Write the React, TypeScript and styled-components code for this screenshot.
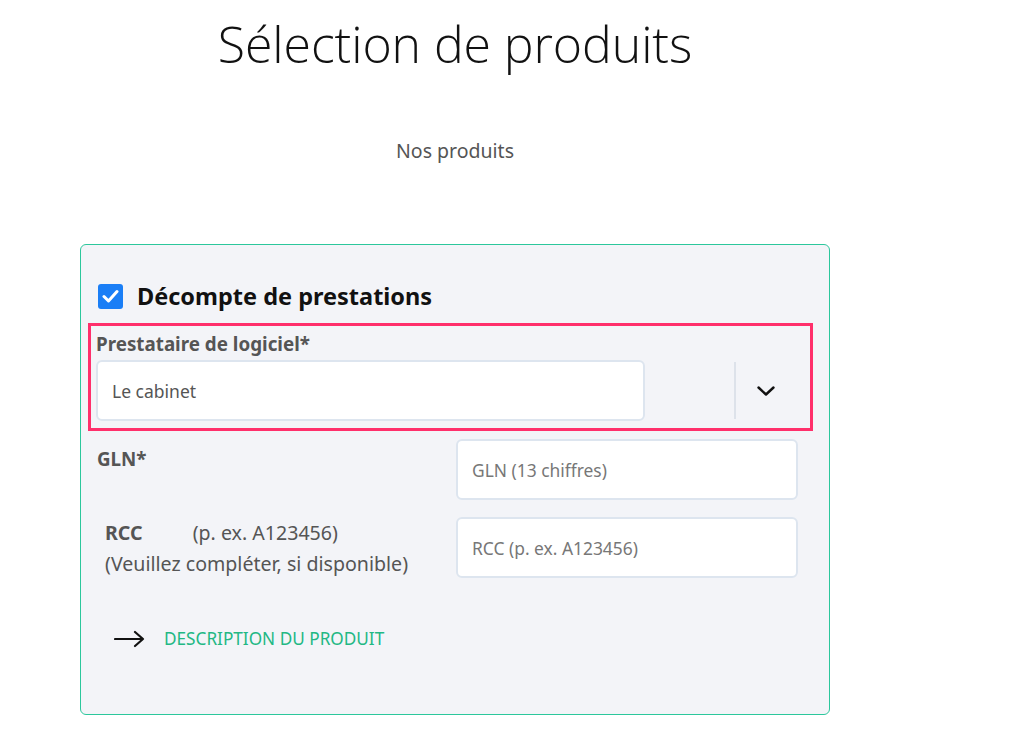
import React from "react";
import styled, { createGlobalStyle } from "styled-components";

const Global = createGlobalStyle`
  html, body { margin: 0; padding: 0; background: #ffffff; }
  body { font-family: "Noto Sans", "Open Sans", sans-serif; color: #222; }
`;

const Page = styled.div`
  width: 750px;
  margin-left: 80px;
  display: flex;
  flex-direction: column;
  align-items: center;
`;

const Title = styled.h1`
  margin: 10px 0 0 0;
  font-family: "Open Sans", "Noto Sans", sans-serif;
  font-weight: 300;
  font-size: 50px;
  line-height: 68px;
  color: #111;
  letter-spacing: -0.1px;
`;

const Subtitle = styled.p`
  margin: 61px 0 0 0;
  font-size: 19.5px;
  line-height: 24px;
  color: #555;
`;

const Card = styled.section`
  align-self: stretch;
  margin-top: 81px;
  box-sizing: border-box;
  height: 471px;
  border: 1.5px solid #2cc79c;
  border-radius: 6px;
  background: #f3f4f8;
  padding: 38px 31px 0 16px;
  display: flex;
  flex-direction: column;
`;

const CheckRow = styled.label`
  display: flex;
  align-items: center;
  gap: 14px;
  padding-left: 1px;
  font-size: 23.5px;
  font-weight: 700;
  color: #111;
  line-height: 26px;
`;

const CheckBox = styled.span`
  width: 25px;
  height: 25px;
  border-radius: 3px;
  background: #1a7ef6;
  display: flex;
  align-items: center;
  justify-content: center;
`;

const Highlight = styled.div`
  margin: 14px -15px 0 -9px;
  border: 3px solid #ff2f6b;
  padding: 6px 0 7px 5px;
  display: flex;
  flex-direction: column;
  gap: 4px;
`;

const FieldLabel = styled.span`
  font-size: 18.8px;
  font-weight: 700;
  color: #555;
  line-height: 24px;
`;

const SelectControl = styled.div`
  display: flex;
  align-items: stretch;
  height: 61px;
`;

const SelectValue = styled.div`
  box-sizing: border-box;
  width: 549px;
  background: #fff;
  border: 2px solid #dde5ef;
  border-radius: 6px;
  display: flex;
  align-items: center;
  padding-left: 14px;
  font-size: 17.5px;
  color: #555;
`;

const Indicator = styled.div`
  margin: 2px 0 2px 89px;
  border-left: 2px solid #dde2ea;
  width: 60px;
  display: flex;
  align-items: center;
  justify-content: center;
`;

const FormRow = styled.div<{ $top: number }>`
  display: grid;
  grid-template-columns: 359px 342px;
  margin-top: ${(p) => p.$top}px;
  align-items: start;
`;

const RowLabel = styled.div<{ $indent?: number }>`
  padding-top: ${(p) => (p.$indent ? 0 : 4)}px;
  padding-left: ${(p) => (p.$indent ? 8 : 0)}px;
  font-size: 19.6px;
  line-height: 31px;
  color: #555;
`;

const Strong = styled.strong`
  font-weight: 700;
  margin-right: 50px;
`;

const TextInput = styled.input`
  box-sizing: border-box;
  width: 342px;
  height: 61px;
  background: #fff;
  border: 2px solid #dde5ef;
  border-radius: 6px;
  padding: 0 14px;
  font-family: "Noto Sans", "Open Sans", sans-serif;
  font-size: 17.4px;
  color: #555;
  outline: none;
  &::placeholder { color: #777; }
`;

const Link = styled.a`
  margin-top: 49px;
  margin-left: 17px;
  display: flex;
  align-items: center;
  gap: 18px;
  font-size: 17.2px;
  color: #22b884;
  text-decoration: none;
  line-height: 22px;
`;

export default function App() {
  return (
    <>
      <Global />
      <Page>
        <Title>Sélection de produits</Title>
        <Subtitle>Nos produits</Subtitle>
        <Card>
          <CheckRow>
            <CheckBox>
              <svg width="17" height="14" viewBox="0 0 17 14">
                <path d="M2 7.5 L6.5 12 L15 2.5" fill="none" stroke="#fff" strokeWidth="3" strokeLinecap="round" strokeLinejoin="round" />
              </svg>
            </CheckBox>
            Décompte de prestations
          </CheckRow>
          <Highlight>
            <FieldLabel>Prestataire de logiciel*</FieldLabel>
            <SelectControl>
              <SelectValue>Le cabinet</SelectValue>
              <Indicator>
                <svg width="20" height="12" viewBox="0 0 20 12">
                  <path d="M2.5 2.5 L10 9.5 L17.5 2.5" fill="none" stroke="#111" strokeWidth="2.4" strokeLinecap="round" strokeLinejoin="round" />
                </svg>
              </Indicator>
            </SelectControl>
          </Highlight>
          <FormRow $top={8}>
            <RowLabel>
              <FieldLabel>GLN*</FieldLabel>
            </RowLabel>
            <TextInput placeholder="GLN (13 chiffres)" />
          </FormRow>
          <FormRow $top={17}>
            <RowLabel $indent={8}>
              <Strong>RCC</Strong>(p. ex. A123456)
              <br />
              (Veuillez compléter, si disponible)
            </RowLabel>
            <TextInput placeholder="RCC (p. ex. A123456)" />
          </FormRow>
          <Link href="#">
            <svg width="32" height="18" viewBox="0 0 32 18">
              <path d="M1 9 H29 M21 2 L29 9 L21 16" fill="none" stroke="#111" strokeWidth="2.2" strokeLinecap="round" strokeLinejoin="round" />
            </svg>
            DESCRIPTION DU PRODUIT
          </Link>
        </Card>
      </Page>
    </>
  );
}
